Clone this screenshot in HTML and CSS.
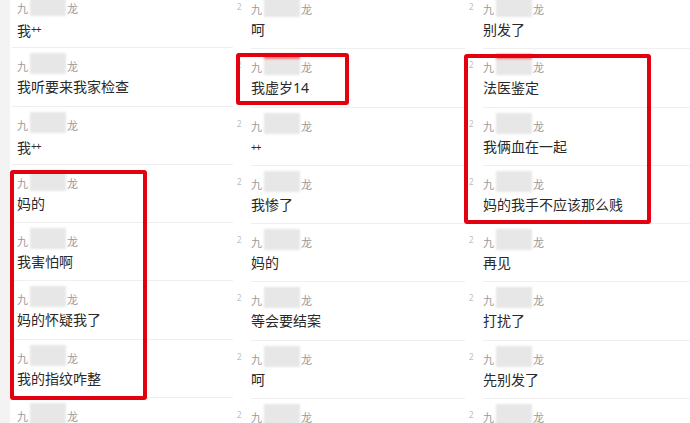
FILE: index.html
```html
<!DOCTYPE html>
<html lang="zh">
<head>
<meta charset="utf-8">
<link rel="stylesheet" href="styles.css">
</head>
<body>
<div class="page">
  <div class="strip"></div>
  <div class="col col1">
    <div class="row"><span class="num">2</span><div class="body"><div class="name">九<span class="blur"></span>龙</div><div class="text">我<span class="plus">++</span></div></div></div>
    <div class="row"><span class="num">2</span><div class="body"><div class="name">九<span class="blur"></span>龙</div><div class="text">我听要来我家检查</div></div></div>
    <div class="row"><span class="num">2</span><div class="body"><div class="name">九<span class="blur"></span>龙</div><div class="text">我<span class="plus">++</span></div></div></div>
    <div class="row"><span class="num">2</span><div class="body"><div class="name">九<span class="blur"></span>龙</div><div class="text">妈的</div></div></div>
    <div class="row"><span class="num">2</span><div class="body"><div class="name">九<span class="blur"></span>龙</div><div class="text">我害怕啊</div></div></div>
    <div class="row"><span class="num">2</span><div class="body"><div class="name">九<span class="blur"></span>龙</div><div class="text">妈的怀疑我了</div></div></div>
    <div class="row"><span class="num">2</span><div class="body"><div class="name">九<span class="blur"></span>龙</div><div class="text">我的指纹咋整</div></div></div>
    <div class="row"><span class="num">2</span><div class="body"><div class="name">九<span class="blur"></span>龙</div><div class="text">嗯</div></div></div>
    <div class="mark mark1"></div>
  </div>
  <div class="col col2">
    <div class="row"><span class="num">2</span><div class="body"><div class="name">九<span class="blur"></span>龙</div><div class="text">呵</div></div></div>
    <div class="row"><span class="num">2</span><div class="body"><div class="name">九<span class="blur hl"></span>龙</div><div class="text">我虚岁14</div></div></div>
    <div class="row"><span class="num">2</span><div class="body"><div class="name">九<span class="blur"></span>龙</div><div class="text"><span class="plus">++</span></div></div></div>
    <div class="row"><span class="num">2</span><div class="body"><div class="name">九<span class="blur"></span>龙</div><div class="text">我惨了</div></div></div>
    <div class="row"><span class="num">2</span><div class="body"><div class="name">九<span class="blur"></span>龙</div><div class="text">妈的</div></div></div>
    <div class="row"><span class="num">2</span><div class="body"><div class="name">九<span class="blur"></span>龙</div><div class="text">等会要结案</div></div></div>
    <div class="row"><span class="num">2</span><div class="body"><div class="name">九<span class="blur"></span>龙</div><div class="text">呵</div></div></div>
    <div class="row"><span class="num">2</span><div class="body"><div class="name">九<span class="blur"></span>龙</div><div class="text">嗯</div></div></div>
    <div class="mark mark2"></div>
  </div>
  <div class="col col3">
    <div class="row"><span class="num">2</span><div class="body"><div class="name">九<span class="blur"></span>龙</div><div class="text">别发了</div></div></div>
    <div class="row"><span class="num">2</span><div class="body"><div class="name">九<span class="blur hl"></span>龙</div><div class="text">法医鉴定</div></div></div>
    <div class="row"><span class="num">2</span><div class="body"><div class="name">九<span class="blur"></span>龙</div><div class="text">我俩血在一起</div></div></div>
    <div class="row"><span class="num">2</span><div class="body"><div class="name">九<span class="blur"></span>龙</div><div class="text">妈的我手不应该那么贱</div></div></div>
    <div class="row"><span class="num">2</span><div class="body"><div class="name">九<span class="blur"></span>龙</div><div class="text">再见</div></div></div>
    <div class="row"><span class="num">2</span><div class="body"><div class="name">九<span class="blur"></span>龙</div><div class="text">打扰了</div></div></div>
    <div class="row"><span class="num">2</span><div class="body"><div class="name">九<span class="blur"></span>龙</div><div class="text">先别发了</div></div></div>
    <div class="row"><span class="num">2</span><div class="body"><div class="name">九<span class="blur"></span>龙</div><div class="text">嗯</div></div></div>
    <div class="mark mark3"></div>
  </div>
</div>
</body>
</html>
```

FILE: styles.css
```css
html, body {
  margin: 0;
  padding: 0;
  background: #ffffff;
}
body {
  width: 690px;
  height: 423px;
  overflow: hidden;
  font-family: "Noto Sans", "Noto Sans CJK SC", sans-serif;
}
.page {
  display: grid;
  grid-template-columns: 10px 223px 232px 1fr;
  height: 423px;
  overflow: hidden;
}
.strip {
  background: #f4f3f3;
}
.col {
  position: relative;
  padding-left: 4px;
  margin-top: -10px;
}
.col1 {
  margin-top: -11px;
  padding-left: 0;
}
.col1 .num {
  visibility: hidden;
  width: 7px;
}
.col1 .body {
  margin-left: -5px;
  padding-left: 5px;
}
.row {
  display: flex;
  height: 58.3px;
}
.num {
  width: 14px;
  flex: none;
  padding-top: 12px;
  font-size: 8px;
  line-height: 10px;
  color: #bdbdbd;
}
.body {
  flex: 1;
  border-top: 1px solid #efefef;
  padding-top: 12px;
}
.name {
  display: flex;
  align-items: flex-end;
  height: 14px;
  line-height: 14px;
  font-size: 11px;
  color: #9b9b9b;
}
.blur {
  position: relative;
  width: 36px;
  height: 21px;
  margin: 0 1px 0 2px;
  background: #e7e7e7;
  filter: blur(1px);
}
.blur.hl::before {
  content: "";
  position: absolute;
  left: 0;
  right: 0;
  top: 0;
  height: 5px;
  background: #f27a7a;
}
.text {
  margin-top: 2px;
  height: 22px;
  line-height: 22px;
  font-size: 14px;
  color: #2a2a2a;
  white-space: nowrap;
}
.plus {
  font-size: 10px;
  vertical-align: 3px;
  letter-spacing: -1px;
}
.mark {
  position: absolute;
  box-sizing: border-box;
  border: 4px solid #e3000f;
  border-radius: 3px;
}
.mark1 {
  left: 0;
  top: 181px;
  width: 137px;
  height: 230px;
}
.mark2 {
  left: 3px;
  top: 63px;
  width: 113px;
  height: 52px;
}
.mark3 {
  left: -1px;
  top: 64px;
  width: 187px;
  height: 170px;
}
```
